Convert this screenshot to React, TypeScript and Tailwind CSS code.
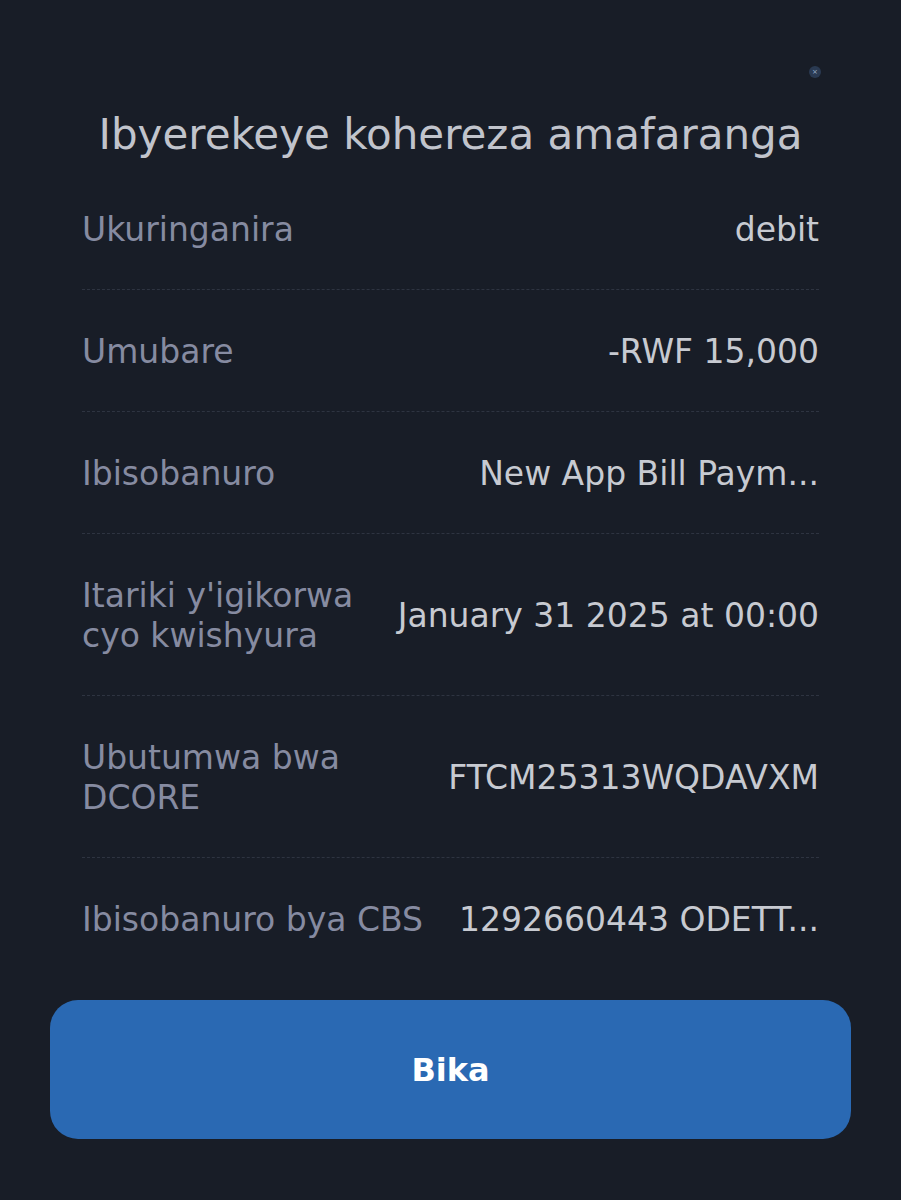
const rows: { label: React.ReactNode; value: string }[] = [
  { label: "Ukuringanira", value: "debit" },
  { label: "Umubare", value: "-RWF 15,000" },
  { label: "Ibisobanuro", value: "New App Bill Paym..." },
  {
    label: (
      <>
        Itariki y'igikorwa
        <br />
        cyo kwishyura
      </>
    ),
    value: "January 31 2025 at 00:00",
  },
  {
    label: (
      <>
        Ubutumwa bwa
        <br />
        DCORE
      </>
    ),
    value: "FTCM25313WQDAVXM",
  },
  { label: "Ibisobanuro bya CBS", value: "1292660443 ODETT..." },
];

function App() {
  return (
    <div
      className="w-[901px] h-[1200px] bg-[#181d27] pt-[66px]"
      style={{ fontFamily: "'DejaVu Sans', Lato, sans-serif" }}
    >
      <div className="flex justify-end pr-[80px] h-3">
        <div className="w-3 h-3 rounded-full bg-[#2a3a52] flex items-center justify-center text-[7px] leading-none text-[#9fb2cc]">
          ×
        </div>
      </div>
      <h1 className="mt-[33px] text-center text-[42px] leading-[48px] text-[#c1c4cc]">
        Ibyerekeye kohereza amafaranga
      </h1>
      <div className="mt-[9px] px-[82px]">
        {rows.map((r, i) => (
          <div
            key={i}
            className={
              "flex justify-between items-center pt-[42px] pb-[39px] text-[33px] leading-[40px] " +
              (i < rows.length - 1 ? "border-b border-dashed border-[#2e3441]" : "")
            }
          >
            <div className="text-[#868ba1] whitespace-nowrap">{r.label}</div>
            <div className="text-[#c7cad1] whitespace-nowrap text-right">{r.value}</div>
          </div>
        ))}
      </div>
      <div className="px-[50px] mt-[21px]">
        <button className="w-full h-[139px] rounded-[28px] bg-[#2a69b3] text-white text-[32px] font-bold">
          Bika
        </button>
      </div>
    </div>
  );
}

export default App;
